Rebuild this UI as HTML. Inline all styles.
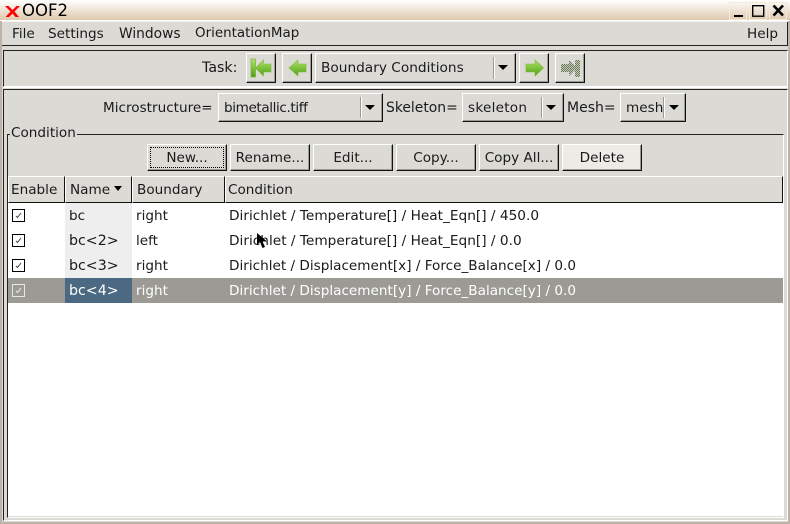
<!DOCTYPE html>
<html><head><meta charset="utf-8"><style>
html,body{margin:0;padding:0}
body{width:790px;height:524px;position:relative;overflow:hidden;background:#dcdad5;font-family:"DejaVu Sans",sans-serif;font-size:13.6px;color:#1a1a1a}
.a{position:absolute;white-space:nowrap;line-height:16px}
.r{position:absolute}
.b{position:absolute;box-sizing:border-box;background:#dcdad5;border:1px solid;border-color:#fff #111 #111 #fff;box-shadow:inset -1px -1px 0 #9c9a94;text-align:center;white-space:nowrap;overflow:hidden;line-height:16px}
.p{height:27px;width:80px;top:144px;padding-top:5px}
.h{top:176px;height:27px;text-align:left;padding-top:5px;box-shadow:none}
.sep{position:absolute;width:1px;background:#9c9a94;border-right:1px solid #fff}
.t{position:absolute;width:0;height:0;border-left:5px solid transparent;border-right:5px solid transparent;border-top:5px solid #000}
.ck{position:absolute;left:12px;width:11px;height:11px;border:1px solid #000;background:#fff}
</style></head><body>
<div class="r" style="left:0;top:0;width:790px;height:20px;background:linear-gradient(#fff,#dfc8ae)"></div>
<div class="r" style="left:0;top:20px;width:790px;height:1px;background:#fff"></div>
<svg class="r" style="left:5px;top:6px" width="15" height="11" viewBox="0 0 15 11"><path d="M0 0h3.500l4 4 4-4H15L9.500 5.500 14 11h-3.500L7.500 7.500 4 11H.5L5.500 5.500z" fill="#f00"/></svg>
<div class="a" style="left:22px;top:3px;font-size:16.500px;color:#000">OOF2</div>
<svg class="r" style="left:729px;top:1px" width="60" height="19" viewBox="0 0 60 19">
<g fill="none" stroke-width="1"><rect x=".5" y="1.500" width="17" height="17" stroke="#f5ead8"/><rect x="20.500" y="1.500" width="17" height="17" stroke="#f5ead8"/><rect x="40.500" y="1.500" width="17" height="17" stroke="#f5ead8"/></g>
<rect x="5" y="14" width="9" height="2" fill="#000"/>
<rect x="23.700" y="4.700" width="11" height="10.500" fill="none" stroke="#000" stroke-width="1.400"/>
<path d="M44.500 4.500l9.500 10M54 4.500l-9.500 10" stroke="#000" stroke-width="2.600"/></svg>

<div class="r" style="left:0;top:21px;width:2px;height:503px;background:#bdb3a8"></div>
<div class="r" style="left:788px;top:21px;width:2px;height:503px;background:#bdb3a8"></div>
<div class="r" style="left:0;top:522px;width:790px;height:2px;background:#bdb3a8"></div>

<div class="r" style="left:2px;top:21px;width:786px;height:1px;background:#f4f3f0"></div>
<div class="r" style="left:2px;top:45px;width:786px;height:1px;background:#222"></div>
<div class="r" style="left:787px;top:22px;width:1px;height:24px;background:#222"></div>
<div class="a" style="left:12px;top:26px">File</div>
<div class="a" style="left:48px;top:26px">Settings</div>
<div class="a" style="left:119px;top:26px;font-size:13.800px">Windows</div>
<div class="a" style="left:195px;top:26px;font-size:13.450px">OrientationMap</div>
<div class="a" style="left:747px;top:26px">Help</div>

<div class="r" style="box-sizing:border-box;left:3px;top:50px;width:785px;height:37px;border:1px solid;border-color:#222 #fff #fff #222"></div>
<div class="r" style="left:3px;top:87px;width:785px;height:1px;background:#fff"></div>
<div class="a" style="left:202px;top:60px;font-size:14.200px">Task:</div>

<div class="b" style="left:246px;top:53px;width:30px;height:30px"></div>
<svg class="r" style="left:249px;top:57px" width="24" height="22" viewBox="0 0 24 22"><defs><linearGradient id="g" x1="0" y1="0" x2="0" y2="1"><stop offset="0" stop-color="#b0e268"/><stop offset="1" stop-color="#4fa012"/></linearGradient></defs><rect x="2" y="2" width="4.500" height="18" fill="url(#g)" stroke="#6fae30" stroke-width=".6"/><path d="M6.500 11l8-8v4h7.500v8h-7.500v4z" fill="url(#g)" stroke="#7cb83c" stroke-width=".6"/></svg>
<div class="b" style="left:282px;top:53px;width:30px;height:30px"></div>
<svg class="r" style="left:287px;top:57px" width="22" height="22" viewBox="0 0 22 22"><path d="M2 11l9-8v4h8v8h-8v4z" fill="url(#g)" stroke="#7cb83c" stroke-width=".6"/></svg>
<div class="b" style="left:315px;top:53px;width:201px;height:30px;text-align:left;padding:6px 0 0 5px;font-size:13.700px">Boundary Conditions</div>
<div class="sep" style="left:493px;top:57px;height:22px"></div><div class="t" style="left:498px;top:65px"></div>
<div class="b" style="left:519px;top:53px;width:30px;height:30px"></div>
<svg class="r" style="left:524px;top:57px" width="22" height="22" viewBox="0 0 22 22"><path d="M2 7h9V3l8.500 8-8.500 8v-4H2z" fill="url(#g)" stroke="#7cb83c" stroke-width=".6"/></svg>
<div class="b" style="left:555px;top:53px;width:30px;height:30px"></div>
<svg class="r" style="left:559px;top:57px" width="24" height="22" viewBox="0 0 24 22"><defs><pattern id="p" width="2" height="2" patternUnits="userSpaceOnUse"><rect width="2" height="2" fill="#c8cabd"/><rect width="1" height="1" fill="#667a58"/><rect x="1" y="1" width="1" height="1" fill="#667a58"/></pattern></defs><path d="M2 7h8V3l8 8-8 8v-4H2z" fill="url(#p)"/><rect x="16" y="3" width="5" height="17" fill="url(#p)"/></svg>

<div class="r" style="box-sizing:border-box;left:3px;top:89px;width:785px;height:432px;border:1px solid;border-color:#222 #fff #fff #222"></div>
<div class="a" style="left:103px;top:100px">Microstructure=</div>
<div class="b" style="left:218px;top:93px;width:165px;height:29px;text-align:left;padding:6px 0 0 5px;letter-spacing:-.4px">bimetallic.tiff</div>
<div class="sep" style="left:360px;top:97px;height:21px"></div><div class="t" style="left:365px;top:105px"></div>
<div class="a" style="left:386px;top:100px;font-size:13.900px">Skeleton=</div>
<div class="b" style="left:462px;top:93px;width:102px;height:29px;text-align:left;padding:6px 0 0 5px;letter-spacing:.25px">skeleton</div>
<div class="sep" style="left:541px;top:97px;height:21px"></div><div class="t" style="left:546px;top:105px"></div>
<div class="a" style="left:567px;top:100px;font-size:14px">Mesh=</div>
<div class="b" style="left:620px;top:93px;width:66px;height:29px;text-align:left;padding:6px 0 0 5px"><span style="display:block;width:38px;overflow:hidden">mesh</span></div>
<div class="sep" style="left:663px;top:97px;height:21px"></div><div class="t" style="left:669px;top:105px"></div>

<div class="r" style="box-sizing:border-box;left:7px;top:134px;width:777px;height:384px;border:1px solid;border-color:#222 #fff #fff #222"></div>
<div class="a" style="left:10px;top:125px;background:#dcdad5;padding:0 1px;height:14px">Condition</div>

<div class="b p" style="left:147px"><span class="r" style="left:2px;top:2px;right:2px;bottom:2px;border:1px dotted #000"></span>New...</div>
<div class="b p" style="left:230px">Rename...</div>
<div class="b p" style="left:313px">Edit...</div>
<div class="b p" style="left:396px">Copy...</div>
<div class="b p" style="left:479px">Copy All...</div>
<div class="b p" style="left:562px;background:#eeebe7">Delete</div>

<div class="b h" style="left:8px;width:57px;padding-left:2px">Enable</div>
<div class="b h" style="left:65px;width:67px;padding-left:4px">Name</div>
<div class="t" style="left:114px;top:186px;border-left-width:4px;border-right-width:4px;border-top-width:5px"></div>
<div class="b h" style="left:132px;width:93px;padding-left:4px">Boundary</div>
<div class="b h" style="left:225px;width:558px;padding-left:2px">Condition</div>

<div class="r" style="left:8px;top:203px;width:775px;height:313px;background:#fff"></div>
<div class="r" style="left:8px;top:516px;width:775px;height:1px;background:#dcdad5"></div>
<div class="r" style="left:65px;top:203px;width:67px;height:75px;background:#eeeeee"></div>
<div class="r" style="left:8px;top:278px;width:775px;height:25px;background:#9c9a94"></div>
<div class="r" style="left:65px;top:278px;width:67px;height:25px;background:#4b6983"></div>

<div class="ck" style="top:209px"><svg style="display:block" width="11" height="11"><path d="M3 6l1.500 1.500L8 3" fill="none" stroke="#444"/></svg></div>
<div class="ck" style="top:234px"><svg style="display:block" width="11" height="11"><path d="M3 6l1.500 1.500L8 3" fill="none" stroke="#444"/></svg></div>
<div class="ck" style="top:259px"><svg style="display:block" width="11" height="11"><path d="M3 6l1.500 1.500L8 3" fill="none" stroke="#444"/></svg></div>
<div class="ck" style="top:284px;background:#9c9a94;border-color:#e8e8e4"><svg style="display:block" width="11" height="11"><path d="M3 6l1.500 1.500L8 3" fill="none" stroke="#eee"/></svg></div>

<div class="a" style="left:69px;top:208px">bc</div><div class="a" style="left:136px;top:208px">right</div><div class="a" style="left:229px;top:208px;font-size:13.690px">Dirichlet / Temperature[] / Heat_Eqn[] / 450.0</div>
<div class="a" style="left:69px;top:233px;font-size:14.200px">bc&lt;2&gt;</div><div class="a" style="left:136px;top:233px">left</div><div class="a" style="left:229px;top:233px;font-size:13.690px">Dirichlet / Temperature[] / Heat_Eqn[] / 0.0</div>
<div class="a" style="left:69px;top:258px;font-size:14.200px">bc&lt;3&gt;</div><div class="a" style="left:136px;top:258px">right</div><div class="a" style="left:229px;top:258px">Dirichlet / Displacement[x] / Force_Balance[x] / 0.0</div>
<div class="a" style="left:69px;top:283px;color:#fff;font-size:14.200px">bc&lt;4&gt;</div><div class="a" style="left:136px;top:283px;color:#fff">right</div><div class="a" style="left:229px;top:283px;color:#fff">Dirichlet / Displacement[y] / Force_Balance[y] / 0.0</div>

<svg class="r" style="left:257px;top:233px" width="11" height="16" viewBox="0 0 11 16"><path d="M0 0v12l3-3 2.500 6 2.500-1-2.500-5.500H10z" fill="#000"/></svg>
</body></html>
